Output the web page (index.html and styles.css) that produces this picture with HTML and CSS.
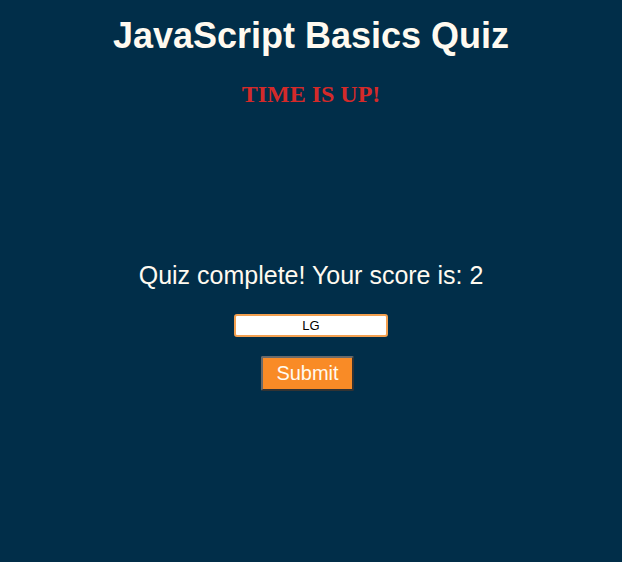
FILE: index.html
```html
<!DOCTYPE html>
<html>
<head>
<meta charset="utf-8">
<link rel="stylesheet" href="styles.css">
</head>
<body>
<main class="quiz">
  <h1 class="title">JavaScript Basics Quiz</h1>
  <p class="timer">TIME IS UP!</p>
  <div class="spacer"></div>
  <p class="result">Quiz complete! Your score is: 2</p>
  <input class="name" type="text" value="LG">
  <button class="submit">Submit</button>
</main>
</body>
</html>
```
FILE: styles.css
```css
html, body {
  margin: 0;
  padding: 0;
  background: #012e49;
  height: 100%;
}
.quiz {
  display: flex;
  flex-direction: column;
  align-items: center;
  font-family: "Liberation Sans", Arial, sans-serif;
  color: #fffaf0;
}
.title {
  margin: 14px 0 0;
  font-size: 36px;
  font-weight: bold;
  line-height: 44px;
}
.timer {
  margin: 21px 0 0;
  font-family: "Liberation Serif", "Times New Roman", serif;
  font-weight: bold;
  font-size: 24px;
  line-height: 30px;
  color: #d42a2a;
}
.spacer {
  height: 151px;
}
.result {
  margin: 0;
  font-size: 25px;
  line-height: 30px;
}
.name {
  margin-top: 24px;
  box-sizing: border-box;
  width: 154px;
  height: 23px;
  border: 2px solid #f3a050;
  border-radius: 3px;
  background: #fff;
  text-align: center;
  font-family: "Liberation Sans", Arial, sans-serif;
  font-size: 13px;
  color: #000;
  padding: 0 4px;
}
.submit {
  margin-top: 19px;
  margin-right: 7px;
  box-sizing: border-box;
  width: 93px;
  height: 35px;
  background: #f98b26;
  border: 2px solid #555;
  border-color: #6a6a6a #333 #333 #6a6a6a;
  border-radius: 2px;
  color: #fffaf0;
  font-family: "Liberation Sans", Arial, sans-serif;
  font-size: 20px;
  padding: 0;
}
```
